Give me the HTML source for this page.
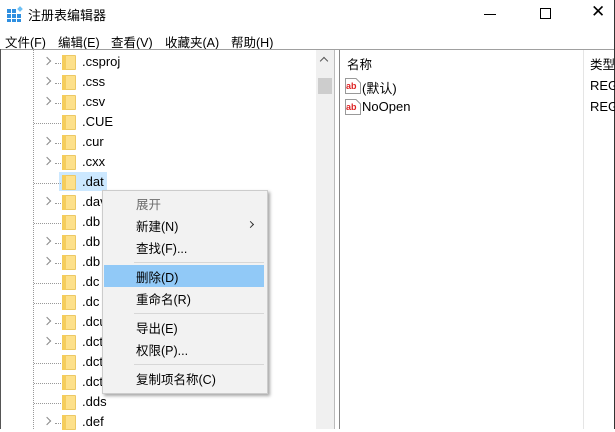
<!DOCTYPE html><html><head><meta charset="utf-8"><style>
*{margin:0;padding:0;box-sizing:border-box}
body{width:615px;height:429px;overflow:hidden;background:#fff;position:relative;font-family:"Liberation Sans","Noto Sans CJK SC",sans-serif;font-size:12.5px;color:#000}
.a{position:absolute;white-space:nowrap}
.row{position:absolute;left:0;height:20px;width:316px}
.fold{position:absolute;left:62px;top:3px;width:14px;height:15px;background:#fde08a;border:1px solid #ecc965;border-radius:1px}
.fold:before{content:"";position:absolute;left:-1px;top:-1px;width:4px;height:15px;background:#f5cd5c}
.lbl{position:absolute;left:82px;top:2px;font-size:13px}
.chev{position:absolute;left:44px;top:6px;width:6px;height:6px;border-right:1.5px solid #888;border-top:1.5px solid #888;transform:rotate(45deg)}
.dot{position:absolute;left:55px;top:11px;width:6px;border-top:1px dotted #999}
.dotl{position:absolute;left:34px;top:11px;width:27px;border-top:1px dotted #999}
.mi{position:absolute;left:136px;font-size:12.5px}
.sep{position:absolute;left:134px;width:130px;height:1px;background:#d7d7d7}
</style></head><body>
<svg class="a" style="left:7px;top:6px" width="16" height="16"><g fill="#2f8fe0"><rect x="0" y="3" width="4" height="4"/><rect x="5" y="3" width="4" height="4"/><rect x="0" y="8" width="4" height="4"/><rect x="5" y="8" width="4" height="4"/><rect x="10" y="8" width="4" height="4"/><rect x="0" y="13" width="4" height="3"/><rect x="5" y="13" width="4" height="3"/><rect x="10" y="13" width="4" height="3"/></g><rect x="11" y="1" width="4" height="4" fill="#6cc0f5" transform="rotate(45 13 3)"/></svg>
<div class="a" style="left:28px;top:5px;font-size:13px">注册表编辑器</div>
<div class="a" style="left:484px;top:14px;width:12px;height:1px;background:#000"></div>
<div class="a" style="left:540px;top:8px;width:11px;height:11px;border:1px solid #000"></div>
<div class="a" style="left:591px;top:2px;font-size:17px;font-weight:300">✕</div>
<div class="a" style="left:5px;top:32px">文件(F)</div>
<div class="a" style="left:58px;top:32px">编辑(E)</div>
<div class="a" style="left:111px;top:32px">查看(V)</div>
<div class="a" style="left:165px;top:32px">收藏夹(A)</div>
<div class="a" style="left:231px;top:32px">帮助(H)</div>
<div class="a" style="left:0;top:49px;width:615px;height:1px;background:#a0a0a0"></div>
<div class="a" style="left:0;top:49px;width:1px;height:380px;background:#555"></div>
<div class="a" style="left:33px;top:50px;height:379px;border-left:1px dotted #999"></div>
<div class="a" style="left:316px;top:50px;width:18px;height:379px;background:#f0f0f0"></div>
<div class="a" style="left:318px;top:78px;width:14px;height:16px;background:#cdcdcd"></div>
<div class="a" style="left:321px;top:58px;width:6px;height:6px;border-left:1.5px solid #555;border-top:1.5px solid #555;transform:rotate(45deg)"></div>
<div class="a" style="left:334px;top:50px;width:1px;height:379px;background:#bbb"></div>
<div class="a" style="left:339px;top:50px;width:1px;height:379px;background:#888"></div>
<div class="a" style="left:614px;top:0;width:1px;height:429px;background:#333"></div>
<div class="a" style="left:583px;top:50px;width:1px;height:379px;background:#e5e5e5"></div>
<div class="a" style="left:347px;top:54px">名称</div>
<div class="a" style="left:590px;top:54px">类型</div>
<svg class="a" style="left:345px;top:78px" width="16" height="16"><path d="M0.5 0.5H11L15.5 5V15.5H0.5Z" fill="#fff" stroke="#999"/><text x="1" y="11" font-size="9" font-weight="bold" fill="#d22" font-family="Liberation Sans">ab</text></svg>
<div class="a" style="left:362px;top:78px;font-size:13px">(默认)</div>
<div class="a" style="left:590px;top:78px;font-size:13px">REG</div>
<svg class="a" style="left:345px;top:99px" width="16" height="16"><path d="M0.5 0.5H11L15.5 5V15.5H0.5Z" fill="#fff" stroke="#999"/><text x="1" y="11" font-size="9" font-weight="bold" fill="#d22" font-family="Liberation Sans">ab</text></svg>
<div class="a" style="left:362px;top:99px;font-size:13px">NoOpen</div>
<div class="a" style="left:590px;top:99px;font-size:13px">REG</div>

<div class="row" style="top:52px"><div class="chev"></div><div class="dot"></div><div class="fold"></div><div class="lbl">.csproj</div></div>
<div class="row" style="top:72px"><div class="chev"></div><div class="dot"></div><div class="fold"></div><div class="lbl">.css</div></div>
<div class="row" style="top:92px"><div class="chev"></div><div class="dot"></div><div class="fold"></div><div class="lbl">.csv</div></div>
<div class="row" style="top:112px"><div class="dotl"></div><div class="fold"></div><div class="lbl">.CUE</div></div>
<div class="row" style="top:132px"><div class="chev"></div><div class="dot"></div><div class="fold"></div><div class="lbl">.cur</div></div>
<div class="row" style="top:152px"><div class="chev"></div><div class="dot"></div><div class="fold"></div><div class="lbl">.cxx</div></div>
<div class="a" style="left:59px;top:172px;width:48px;height:19px;background:#cce8ff"></div>
<div class="row" style="top:172px"><div class="dotl"></div><div class="fold"></div><div class="lbl">.dat</div></div>
<div class="row" style="top:192px"><div class="chev"></div><div class="dot"></div><div class="fold"></div><div class="lbl">.dav</div></div>
<div class="row" style="top:212px"><div class="dotl"></div><div class="fold"></div><div class="lbl">.db</div></div>
<div class="row" style="top:232px"><div class="chev"></div><div class="dot"></div><div class="fold"></div><div class="lbl">.db</div></div>
<div class="row" style="top:252px"><div class="chev"></div><div class="dot"></div><div class="fold"></div><div class="lbl">.db</div></div>
<div class="row" style="top:272px"><div class="dotl"></div><div class="fold"></div><div class="lbl">.dc</div></div>
<div class="row" style="top:292px"><div class="dotl"></div><div class="fold"></div><div class="lbl">.dc</div></div>
<div class="row" style="top:312px"><div class="chev"></div><div class="dot"></div><div class="fold"></div><div class="lbl">.dcu</div></div>
<div class="row" style="top:332px"><div class="chev"></div><div class="dot"></div><div class="fold"></div><div class="lbl">.dct</div></div>
<div class="row" style="top:352px"><div class="dotl"></div><div class="fold"></div><div class="lbl">.dct</div></div>
<div class="row" style="top:372px"><div class="dotl"></div><div class="fold"></div><div class="lbl">.dct</div></div>
<div class="row" style="top:392px"><div class="dotl"></div><div class="fold"></div><div class="lbl">.dds</div></div>
<div class="row" style="top:412px"><div class="chev"></div><div class="dot"></div><div class="fold"></div><div class="lbl">.def</div></div>

<div class="a" style="left:102px;top:190px;width:166px;height:204px;background:#f2f2f2;border:1px solid #ccc;box-shadow:2px 2px 3px rgba(0,0,0,.35)"></div>
<div class="a" style="left:104px;top:265px;width:160px;height:22px;background:#91c9f7"></div>
<div class="mi" style="top:194px;color:#6d6d6d">展开</div>
<div class="mi" style="top:216px">新建(N)</div>
<div class="a" style="left:248px;top:222px;width:5px;height:5px;border-right:1.2px solid #333;border-top:1.2px solid #333;transform:rotate(45deg)"></div>
<div class="mi" style="top:238px">查找(F)...</div>
<div class="sep" style="top:262px"></div>
<div class="mi" style="top:267px">删除(D)</div>
<div class="mi" style="top:289px">重命名(R)</div>
<div class="sep" style="top:313px"></div>
<div class="mi" style="top:318px">导出(E)</div>
<div class="mi" style="top:340px">权限(P)...</div>
<div class="sep" style="top:364px"></div>
<div class="mi" style="top:369px">复制项名称(C)</div>
</body></html>
